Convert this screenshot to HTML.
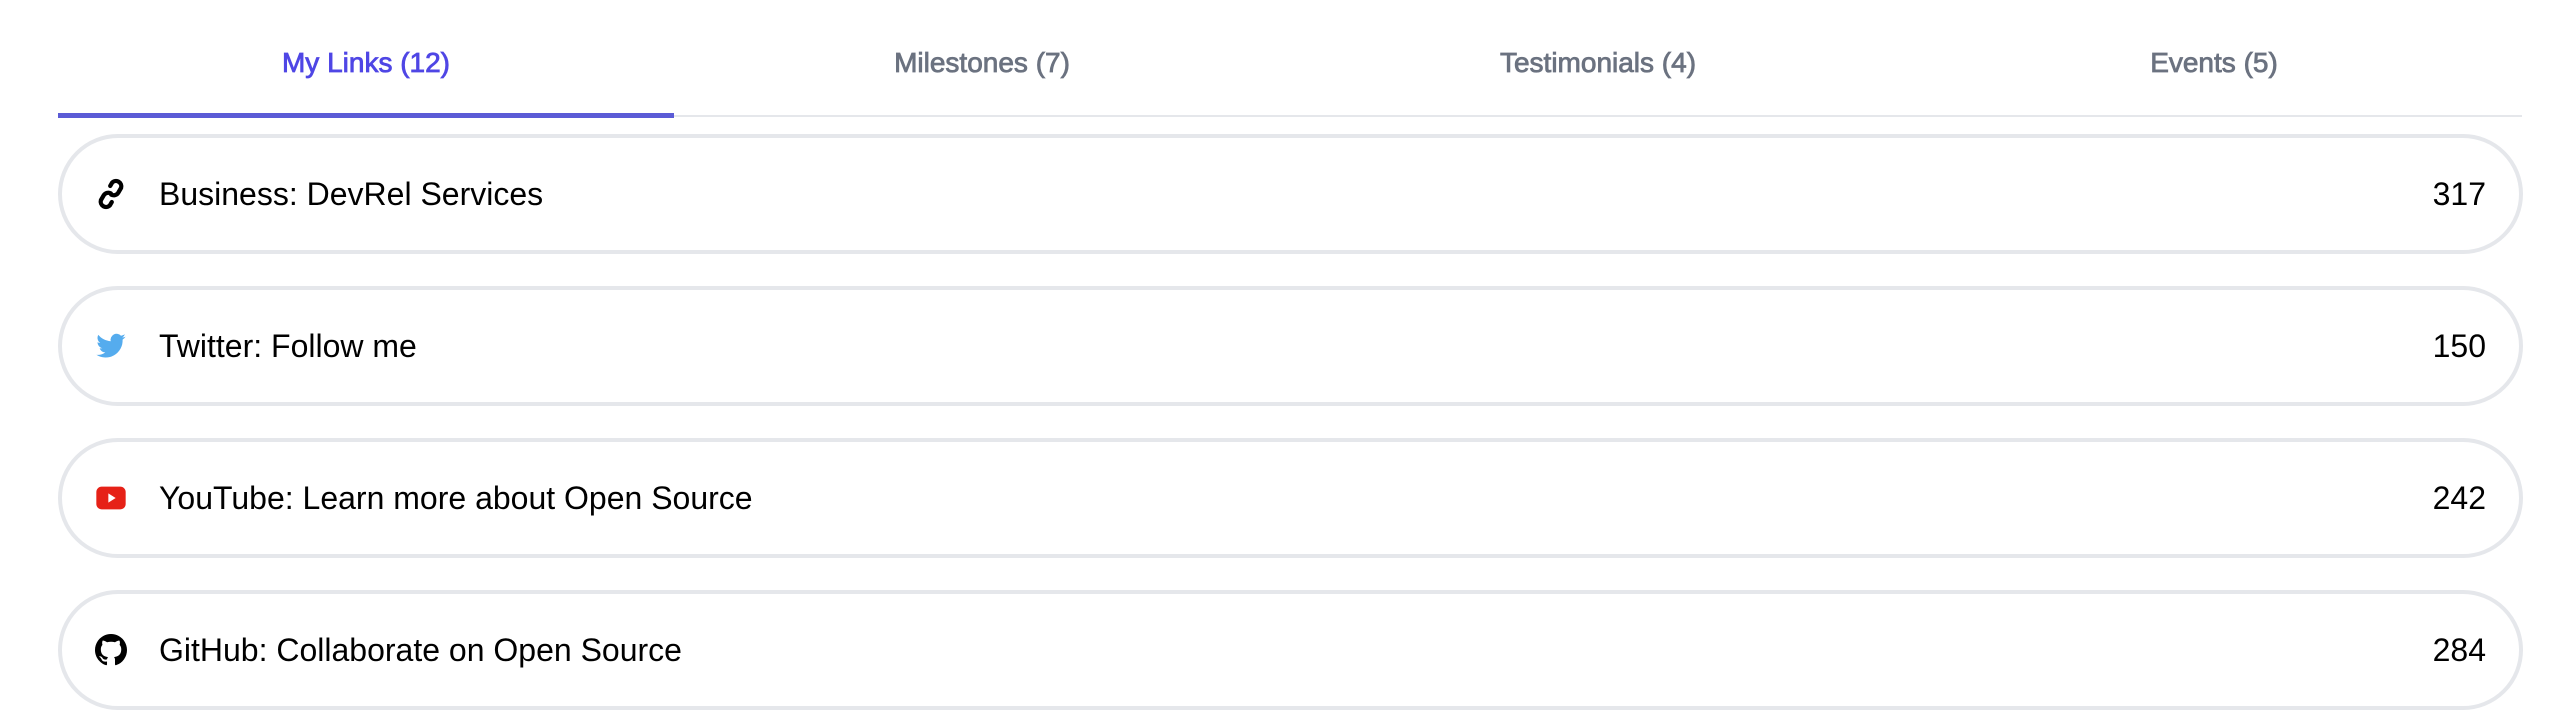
<!DOCTYPE html>
<html><head><meta charset="utf-8"><style>
html,body{margin:0;padding:0;background:#fff;width:2552px;height:728px;overflow:hidden;font-family:"Liberation Sans",sans-serif}
.tabs{position:absolute;left:58px;top:0;width:2464px;height:118px;}
.tabs .line{position:absolute;left:0;right:0;top:115px;height:2px;background:#e5e7eb}
.tab{position:absolute;top:0;width:616px;height:118px;text-align:center;line-height:126px;font-size:28px;font-weight:normal;color:#6b7280;-webkit-text-stroke:0.8px #6b7280}
.tab.act{color:#4f46e5;-webkit-text-stroke:0.8px #4f46e5}
.tab.act:after{content:"";position:absolute;left:0;right:0;top:113px;height:5px;background:#5b5bd6}
.card{position:absolute;left:58px;width:2457px;height:112px;border:4px solid #e5e7eb;border-radius:60px;box-sizing:content-box}
.card .ic{position:absolute;left:33px;top:40px;width:32px;height:32px}
.card .t{position:absolute;left:97px;top:0;line-height:112px;font-size:32px;color:#000}
.card .n{position:absolute;right:33px;top:0;line-height:112px;font-size:32px;color:#000}
</style></head><body>
<div class="tabs"><div class="line"></div>
<div class="tab act" style="left:0">My Links (12)</div>
<div class="tab" style="left:616px">Milestones (7)</div>
<div class="tab" style="left:1232px">Testimonials (4)</div>
<div class="tab" style="left:1848px">Events (5)</div>
</div>
<div class="card" style="top:134px"><svg class="ic" viewBox="0 0 24 24"><g fill="none" stroke="#000" stroke-width="3.2" stroke-linecap="round" transform="rotate(-15 12 12)"><path d="M13 6l2-2a4 4 0 0 1 5.5 5.5l-3 3a4 4 0 0 1-5.5 0"/><path d="M11 18l-2 2a4 4 0 0 1-5.5-5.5l3-3a4 4 0 0 1 5.5 0"/></g></svg><div class="t">Business: DevRel Services</div><div class="n">317</div></div>
<div class="card" style="top:286px"><svg class="ic" viewBox="0 0 24 24"><path fill="#55acee" d="M23 5c-.8.4-1.7.6-2.6.7.9-.6 1.6-1.4 2-2.5-.9.5-1.9.9-2.9 1.1a4.5 4.5 0 0 0-7.7 4.1C8 8.2 4.7 6.4 2.5 3.7c-1.2 2-.6 4.600 1.4 6-.7 0-1.4-.2-2-.6 0 2.2 1.5 4.1 3.6 4.5-.7.2-1.4.2-2 .1.6 1.8 2.3 3.1 4.2 3.1A9 9 0 0 1 1 18.6 12.8 12.8 0 0 0 20.7 7.2c.9-.6 1.7-1.4 2.3-2.2z"/></svg><div class="t">Twitter: Follow me</div><div class="n">150</div></div>
<div class="card" style="top:438px"><svg class="ic" viewBox="0 0 24 24"><rect x="1" y="3.5" width="22" height="17" rx="4" fill="#e62117"/><path d="M10 8.5v7l5.5-3.5z" fill="#fff"/></svg><div class="t">YouTube: Learn more about Open Source</div><div class="n">242</div></div>
<div class="card" style="top:590px"><svg class="ic" viewBox="0 0 16 16"><path fill="#000" d="M8 0C3.58 0 0 3.58 0 8c0 3.54 2.29 6.53 5.47 7.59.4.07.55-.17.55-.38 0-.19-.01-.82-.01-1.49-2.01.37-2.53-.49-2.69-.94-.09-.23-.48-.94-.82-1.13-.28-.15-.68-.52-.01-.53.63-.01 1.08.58 1.23.82.72 1.21 1.87.87 2.33.66.07-.52.28-.87.51-1.07-1.78-.2-3.64-.89-3.64-3.95 0-.87.31-1.59.82-2.15-.08-.2-.36-1.02.08-2.12 0 0 .67-.21 2.2.82.64-.18 1.32-.27 2-.27.68 0 1.36.09 2 .27 1.53-1.04 2.2-.82 2.2-.82.44 1.1.16 1.92.08 2.12.51.56.82 1.27.82 2.15 0 3.07-1.87 3.75-3.65 3.95.29.25.54.73.54 1.48 0 1.07-.01 1.93-.01 2.2 0 .21.15.46.55.38A8.013 8.013 0 0 0 16 8c0-4.42-3.58-8-8-8z"/></svg><div class="t">GitHub: Collaborate on Open Source</div><div class="n">284</div></div>
</body></html>
